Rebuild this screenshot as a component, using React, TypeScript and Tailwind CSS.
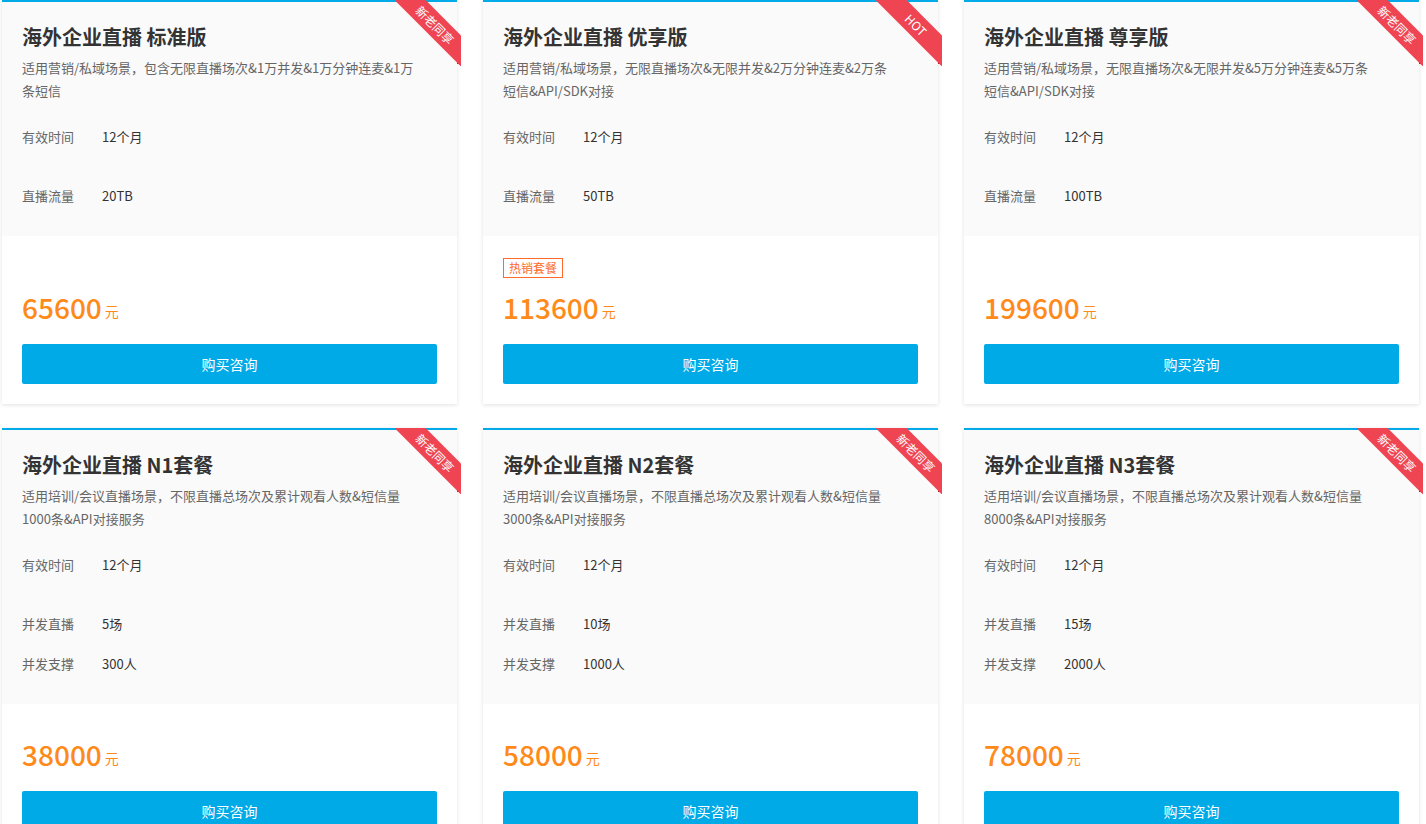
const plans = [
  { title: '海外企业直播 标准版', desc: '适用营销/私域场景，包含无限直播场次&1万并发&1万分钟连麦&1万条短信', rows: [['有效时间', '12个月'], ['直播流量', '20TB']], price: '65600', badge: '新老同享', tagRow: true },
  { title: '海外企业直播 优享版', desc: '适用营销/私域场景，无限直播场次&无限并发&2万分钟连麦&2万条短信&API/SDK对接', rows: [['有效时间', '12个月'], ['直播流量', '50TB']], price: '113600', badge: 'HOT', tag: '热销套餐', tagRow: true },
  { title: '海外企业直播 尊享版', desc: '适用营销/私域场景，无限直播场次&无限并发&5万分钟连麦&5万条短信&API/SDK对接', rows: [['有效时间', '12个月'], ['直播流量', '100TB']], price: '199600', badge: '新老同享', tagRow: true },
  { title: '海外企业直播 N1套餐', desc: '适用培训/会议直播场景，不限直播总场次及累计观看人数&短信量1000条&API对接服务', rows: [['有效时间', '12个月'], ['并发直播', '5场'], ['并发支撑', '300人']], price: '38000', badge: '新老同享' },
  { title: '海外企业直播 N2套餐', desc: '适用培训/会议直播场景，不限直播总场次及累计观看人数&短信量3000条&API对接服务', rows: [['有效时间', '12个月'], ['并发直播', '10场'], ['并发支撑', '1000人']], price: '58000', badge: '新老同享' },
  { title: '海外企业直播 N3套餐', desc: '适用培训/会议直播场景，不限直播总场次及累计观看人数&短信量8000条&API对接服务', rows: [['有效时间', '12个月'], ['并发直播', '15场'], ['并发支撑', '2000人']], price: '78000', badge: '新老同享' },
]

function Ribbon({ text }: { text: string }) {
  return (
    <div className="absolute right-[-4px] top-[-2px] w-[66px] h-[66px] overflow-hidden">
      <div className="absolute right-0 bottom-[2px] w-[4px] h-[6px] bg-[#a51d2a]" />
      <div className="absolute top-[14px] right-[-22px] w-[96px] h-[22px] rotate-45 bg-[#ef4452] text-white text-[12px] leading-[22px] text-center">
        {text}
      </div>
    </div>
  )
}

export default function App() {
  return (
    <div className="w-[1426px] h-[824px] overflow-hidden bg-white pl-[2px] pr-[7px]" style={{ fontFamily: '"Noto Sans CJK SC", "Noto Sans", sans-serif' }}>
      <div className="grid grid-cols-3 gap-x-[26px] gap-y-[24px] items-start">
        {plans.map((p) => (
          <div key={p.title} className="relative border-t-2 border-[#00aae7] bg-white shadow-[0_1px_4px_rgba(0,0,0,0.12)]">
            <Ribbon text={p.badge} />
            <div className="bg-[#fafafa] px-[20px] pt-[20px] pb-[30px]">
              <div className="text-[20px] font-bold text-[#333] leading-[30px]">{p.title}</div>
              <div className="mt-[4px] text-[13px] leading-[23px] text-[#666] pr-[22px]">{p.desc}</div>
              <div className="mt-[25px] flex flex-col gap-[20px]">
                {p.rows.map((r, i) => (
                  <div key={r[0]} className={`flex h-[20px] items-center text-[13px] ${i === 0 ? 'mb-[19px]' : ''}`}>
                    <span className="w-[80px] text-[#666]">{r[0]}</span>
                    <span className="text-[#333]">{r[1]}</span>
                  </div>
                ))}
              </div>
            </div>
            <div className={`px-[20px] pb-[20px] ${p.tagRow ? 'pt-[18px]' : 'pt-[30px]'}`}>
              {p.tagRow && (
                <div className="h-[20px] mb-[13px]">
                  {p.tag && (
                    <span className="inline-block border border-[#ff6a2a] text-[#ff6a2a] text-[12px] leading-[18px] px-[5px]">{p.tag}</span>
                  )}
                </div>
              )}
              <div className="h-[40px] flex items-center text-[#ff8a1a]">
                <span className="text-[28px] font-medium">{p.price}</span>
                <span className="ml-[3px] mt-[8px] text-[14px]">元</span>
              </div>
              <button className="mt-[17px] w-full h-[40px] rounded-[2px] bg-[#00aae7] text-white text-[14px]">购买咨询</button>
            </div>
          </div>
        ))}
      </div>
    </div>
  )
}
